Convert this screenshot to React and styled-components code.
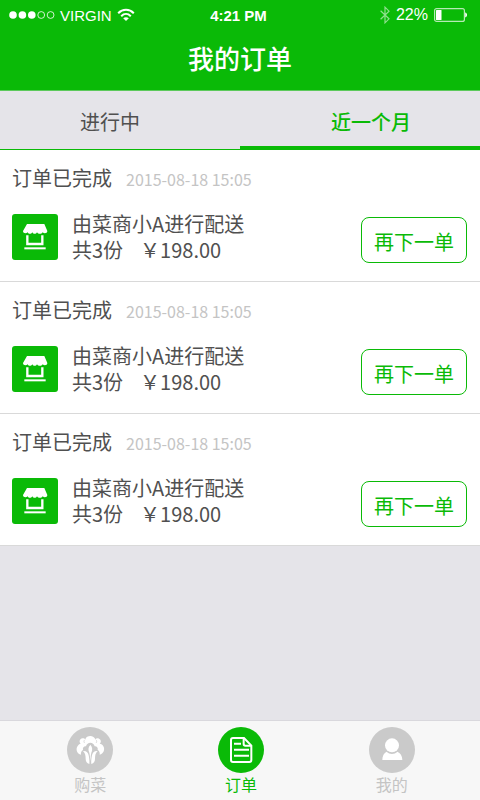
import React, { useState } from 'react'
import styled, { createGlobalStyle } from 'styled-components'

const GREEN = '#0aba07'

const orders = [
    { id: 1, status: '订单已完成', time: '2015-08-18 15:05', seller: '由菜商小A进行配送', count: '共3份', price: '￥198.00' },
    { id: 2, status: '订单已完成', time: '2015-08-18 15:05', seller: '由菜商小A进行配送', count: '共3份', price: '￥198.00' },
    { id: 3, status: '订单已完成', time: '2015-08-18 15:05', seller: '由菜商小A进行配送', count: '共3份', price: '￥198.00' },
]

function WifiIcon() {
    return (
        <svg width="18" height="14" viewBox="0 0 18 14" fill="none" stroke="#fff" strokeWidth="2">
            <path d="M1.2 5.2C5.6 0.6 12.4 0.6 16.8 5.2" />
            <path d="M4.2 8.2C7 5.4 11 5.4 13.8 8.2" />
            <path d="M9 13L6.2 10.2C7.8 8.8 10.2 8.8 11.8 10.2Z" fill="#fff" stroke="none" />
        </svg>
    )
}

function BluetoothIcon() {
    return (
        <svg width="10" height="18" viewBox="0 0 10 18" fill="none" stroke="#fff" strokeOpacity="0.55" strokeWidth="1.2">
            <path d="M0.6 4.8L9 12.8L5 16.8V1.2L9 5.2L0.6 13.2" />
        </svg>
    )
}

function BatteryIcon() {
    return (
        <svg width="34" height="14" viewBox="0 0 34 14">
            <rect x="0.6" y="0.6" width="29.8" height="12.8" rx="2" fill="none" stroke="#fff" strokeOpacity="0.7" strokeWidth="1.2" />
            <rect x="2" y="2" width="5.5" height="10" rx="0.5" fill="#fff" />
            <path d="M31.2 4.6C33.6 5.2 33.6 8.8 31.2 9.4Z" fill="#fff" />
        </svg>
    )
}

function SignalDots() {
    return (
        <svg width="46" height="8" viewBox="0 0 46 8">
            <circle cx="4" cy="4" r="3.8" fill="#fff" />
            <circle cx="13.4" cy="4" r="3.8" fill="#fff" />
            <circle cx="22.8" cy="4" r="3.8" fill="#fff" />
            <circle cx="32.2" cy="4" r="3.4" fill="none" stroke="#fff" strokeWidth="0.8" />
            <circle cx="41.6" cy="4" r="3.4" fill="none" stroke="#fff" strokeWidth="0.8" />
        </svg>
    )
}

function ShopIcon() {
    return (
        <svg width="46" height="46" viewBox="0 0 138 138" fill="#fff">
            <path d="M45 30H97L106 51C106 58 97 60 92 55C88 61 79 61 75 55C72 61 64 61 61 55C57 61 50 61 47 55C42 60 33 58 33 51Z" />
            <path d="M46 64V90H91V64" fill="none" stroke="#fff" strokeWidth="7" />
            <rect x="37" y="100" width="64" height="6" />
        </svg>
    )
}

function VegetableIcon() {
    return (
        <svg width="46" height="46" viewBox="0 0 138 138" fill="#fff">
            <path d="M42 83C30 82 25 66 32 57C34 53 37 51 41 50C35 45 38 35 46 34C50 33 53 35 55 37C57 30 63 27 70 27C77 27 83 31 85 37C87 34 92 33 96 35C103 38 103 46 98 50C103 51 107 53 109 58C115 67 109 82 98 83C99 77 97 72 92 69C94 61 88 57 83 58C81 51 76 47 70 47C64 47 59 51 57 58C52 57 46 61 48 69C43 72 41 77 42 83Z" />
            <path d="M48 72C58 71 64 77 65 85C67 93 68 104 67 111C60 109 56 104 56 96C56 86 55 79 48 72Z" />
            <path d="M92 72C82 71 76 77 75 85C73 93 72 104 73 111C80 109 84 104 84 96C84 86 85 79 92 72Z" />
            <path d="M70 53C77 61 77 69 73 77C71 84 71 94 70 102C69 94 69 84 67 77C63 69 63 61 70 53Z" />
            <path d="M54 38C50 41 50 45 53 48M86 38C90 41 90 45 87 48" fill="none" stroke="#cacaca" strokeWidth="2" />
        </svg>
    )
}

function OrderIcon() {
    return (
        <svg width="46" height="46" viewBox="0 0 138 138" fill="none" stroke="#fff" strokeWidth="6">
            <path d="M45 33H78L100 56V99C100 103 98 105 94 105H45C41 105 39 103 39 99V39C39 35 41 33 45 33Z" />
            <path d="M77 34V51C77 54 79 56 82 56H99" />
            <path d="M48 50H69M48 68H93M48 86H93" />
        </svg>
    )
}

function UserIcon() {
    return (
        <svg width="46" height="46" viewBox="0 0 138 138" fill="#fff">
            <path d="M40 99C40 86 45 78 53 74C62 83 76 83 85 74C94 78 100 86 100 99Z" />
            <circle cx="69" cy="55" r="21" />
        </svg>
    )
}

const navItems = [
    { label: '购菜', Icon: VegetableIcon },
    { label: '订单', Icon: OrderIcon },
    { label: '我的', Icon: UserIcon },
]

function OrderItem({ order }) {
    return (
        <Order>
            <OrderHead>
                <Status>{order.status}</Status>
                <Time>{order.time}</Time>
            </OrderHead>
            <OrderBody>
                <ShopBadge><ShopIcon /></ShopBadge>
                <Info>
                    <div>{order.seller}</div>
                    <Amount>
                        <span>{order.count}</span>
                        <span>{order.price}</span>
                    </Amount>
                </Info>
                <AgainButton type="button">再下一单</AgainButton>
            </OrderBody>
        </Order>
    )
}

function App() {
    const [tab, setTab] = useState('month')

    return (
        <Page>
            <GlobalStyle />
            <Header>
                <StatusBar>
                    <StatusLeft>
                        <SignalDots />
                        <Carrier>VIRGIN</Carrier>
                        <WifiIcon />
                    </StatusLeft>
                    <Clock>4:21 PM</Clock>
                    <StatusRight>
                        <BluetoothIcon />
                        <span>22%</span>
                        <BatteryIcon />
                    </StatusRight>
                </StatusBar>
                <Title>我的订单</Title>
            </Header>
            <Tabs>
                <Tab type="button" $active={tab === 'doing'} $side="left" onClick={() => setTab('doing')}>进行中</Tab>
                <Tab type="button" $active={tab === 'month'} $side="right" onClick={() => setTab('month')}>近一个月</Tab>
            </Tabs>
            <Main>
                {orders.map(order => <OrderItem key={order.id} order={order} />)}
            </Main>
            <NavBar>
                {navItems.map(({ label, Icon }) => (
                    <NavLink key={label} href="#" $active={label === '订单'}>
                        <NavCircle $active={label === '订单'}><Icon /></NavCircle>
                        <NavLabel>{label}</NavLabel>
                    </NavLink>
                ))}
            </NavBar>
        </Page>
    )
}

export default App


const GlobalStyle = createGlobalStyle`
    * {
        box-sizing: border-box;
    }
    body {
        margin: 0;
        font-family: "Noto Sans CJK SC", sans-serif;
        background-color: #e5e4e9;
    }
    button {
        font-family: inherit;
        cursor: pointer;
    }
    svg {
        display: block;
        flex-shrink: 0;
    }
`

const Page = styled.div`
    min-height: 100vh;
    display: flex;
    flex-direction: column;
    color: #505050;
`

const Header = styled.header`
    background-color: ${GREEN};
    color: #fff;
    border-bottom: 1px solid #5cc95c;
`

const StatusBar = styled.div`
    display: grid;
    grid-template-columns: 1fr auto 1fr;
    align-items: center;
    height: 30px;
    padding: 0 12px 0 9px;
    font-family: "Liberation Sans", Arial, sans-serif;
    font-size: 16px;
`

const StatusLeft = styled.div`
    display: flex;
    align-items: center;
    gap: 5px;
`

const StatusRight = styled(StatusLeft)`
    justify-content: flex-end;
    gap: 6px;
`

const Carrier = styled.span`
    font-size: 15px;
`

const Clock = styled.span`
    font-size: 15px;
    font-weight: 700;
`

const Title = styled.h1`
    margin: 0;
    height: 60px;
    line-height: 56px;
    font-size: 26px;
    font-weight: 500;
    text-align: center;
`

const Tabs = styled.div`
    display: grid;
    grid-template-columns: 1fr 1fr;
    height: 59px;
`

const Tab = styled.button`
    padding: ${props => props.$side === 'left' ? '3px 20px 0 0' : '6px 0 0 22px'};
    border: 0;
    border-bottom: ${props => props.$active ? '4px' : '1px'} solid ${GREEN};
    background-color: transparent;
    color: ${props => props.$active ? GREEN : '#505050'};
    font-size: 20px;
    font-weight: ${props => props.$active ? 500 : 400};
`

const Main = styled.main`
    flex: 1;
`

const Order = styled.article`
    padding: 14px 13px 18px 12px;
    background-color: #fff;
    border-bottom: 1px solid #d9d9d9;
`

const OrderHead = styled.div`
    display: flex;
    align-items: baseline;
    gap: 14px;
    line-height: 28px;
`

const Status = styled.span`
    font-size: 20px;
`

const Time = styled.time`
    font-size: 16px;
    color: #c4c4c4;
`

const OrderBody = styled.div`
    display: flex;
    align-items: center;
    margin-top: 18px;
`

const ShopBadge = styled.div`
    margin-right: 14px;
    border-radius: 3px;
    background-color: ${GREEN};
`

const Info = styled.div`
    flex: 1;
    font-size: 20px;
    line-height: 26px;
`

const Amount = styled.div`
    display: flex;
    gap: 17px;
`

const AgainButton = styled.button`
    align-self: flex-end;
    height: 46px;
    padding: 2px 12px 0;
    border: 1px solid ${GREEN};
    border-radius: 8px;
    background-color: #fff;
    color: ${GREEN};
    font-size: 20px;
`

const NavBar = styled.nav`
    display: flex;
    height: 80px;
    padding: 6px 13px 0 15px;
    background-color: #f7f7f7;
    border-top: 1px solid #d9d8dd;
`

const NavLink = styled.a`
    flex: 1;
    display: flex;
    flex-direction: column;
    align-items: center;
    color: ${props => props.$active ? GREEN : '#c4c4c4'};
    text-decoration: none;
`

const NavCircle = styled.span`
    border-radius: 50%;
    background-color: ${props => props.$active ? GREEN : '#cacaca'};
`

const NavLabel = styled.span`
    font-size: 16px;
    line-height: 22px;
`
